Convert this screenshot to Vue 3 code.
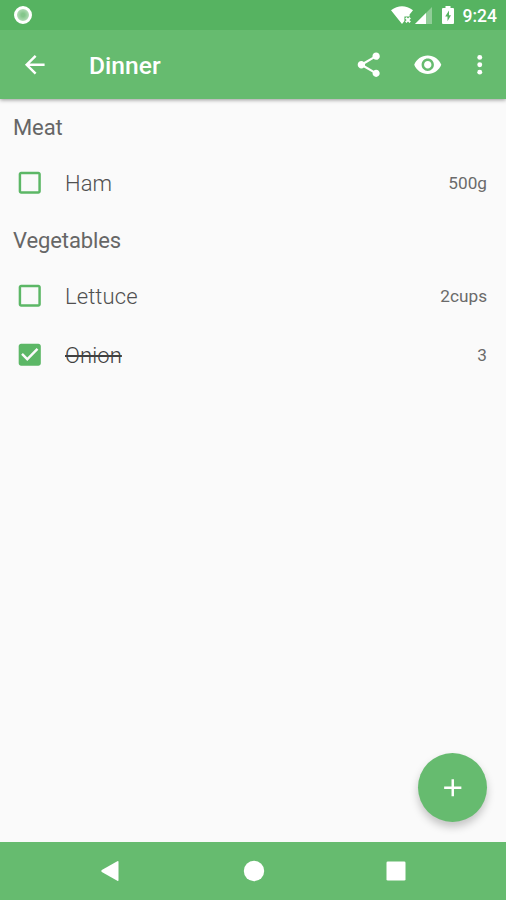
<script setup>
const sections = [
  { name: 'Meat', items: [{ name: 'Ham', amount: '500g', done: false }] },
  {
    name: 'Vegetables',
    items: [
      { name: 'Lettuce', amount: '2cups', done: false },
      { name: 'Onion', amount: '3', done: true },
    ],
  },
]
</script>

<template>
  <div class="screen">
    <div class="status">
      <span class="ring"></span>
      <svg class="wifi" viewBox="0 0 22 18">
        <path d="M0 4.2Q11-3.6 22 4.2L18.6 8.6V10.5H13.4V14.9L11 18Z" />
        <path d="M14.8 11.8l4.400 4.400m0-4.400l-4.400 4.400" stroke="#fff" stroke-width="2" />
      </svg>
      <svg class="signal" viewBox="0 0 17 17">
        <path d="M0 17L17 0V17Z" opacity=".35" />
        <path d="M0 17L11 6V17Z" />
      </svg>
      <svg class="battery" viewBox="0 0 12 18">
        <path fill-rule="evenodd" d="M3.5 0h5v2H11q1 0 1 1v14q0 1-1 1H1q-1 0-1-1V3q0-1 1-1h2.500ZM7 4.500L3.200 10.600H5.500V15.200L9 9.200H7Z" />
      </svg>
      <span class="time">9:24</span>
    </div>
    <header class="bar">
      <svg class="icon" viewBox="0 0 24 24"><path d="M20 11H7.830l5.590-5.590L12 4l-8 8 8 8 1.410-1.410L7.830 13H20v-2z" /></svg>
      <h1>Dinner</h1>
      <svg class="icon share" viewBox="0 0 24 24"><path d="M18 16.080c-.76 0-1.440.3-1.960.77L8.910 12.700c.05-.23.09-.46.09-.7s-.04-.47-.09-.7l7.050-4.110c.54.5 1.250.81 2.040.81 1.660 0 3-1.340 3-3s-1.340-3-3-3-3 1.340-3 3c0 .24.04.47.09.7L8.040 9.810C7.500 9.310 6.790 9 6 9c-1.660 0-3 1.340-3 3s1.340 3 3 3c.79 0 1.500-.31 2.040-.81l7.120 4.160c-.05.21-.08.43-.08.65 0 1.610 1.310 2.920 2.920 2.920s2.920-1.310 2.920-2.920-1.310-2.920-2.920-2.920z" /></svg>
      <svg class="icon eye" viewBox="0 0 24 24"><path d="M12 4.500C7 4.500 2.730 7.610 1 12c1.730 4.390 6 7.500 11 7.500s9.270-3.110 11-7.500c-1.730-4.390-6-7.500-11-7.500zM12 17c-2.760 0-5-2.240-5-5s2.240-5 5-5 5 2.240 5 5-2.240 5-5 5zm0-8c-1.660 0-3 1.340-3 3s1.340 3 3 3 3-1.340 3-3-1.340-3-3-3z" /></svg>
      <svg class="icon more" viewBox="0 0 24 24"><circle cx="12" cy="6" r="2" /><circle cx="12" cy="12" r="2" /><circle cx="12" cy="18" r="2" /></svg>
    </header>
    <main>
      <section v-for="s in sections" :key="s.name">
        <h2>{{ s.name }}</h2>
        <div v-for="i in s.items" :key="i.name" class="row">
          <svg class="check" viewBox="0 0 24 24">
            <path v-if="i.done" d="M19 3H5c-1.110 0-2 .9-2 2v14c0 1.100.89 2 2 2h14c1.110 0 2-.9 2-2V5c0-1.100-.89-2-2-2zm-9 14l-5-5 1.410-1.410L10 14.170l7.590-7.590L19 8l-9 9z" />
            <path v-else d="M19 5v14H5V5h14m0-2H5c-1.100 0-2 .9-2 2v14c0 1.100.9 2 2 2h14c1.100 0 2-.9 2-2V5c0-1.100-.9-2-2-2z" />
          </svg>
          <span class="name" :class="{ done: i.done }">{{ i.name }}</span>
          <span class="amount">{{ i.amount }}</span>
        </div>
      </section>
      <button class="fab" aria-label="Add">
        <svg viewBox="0 0 24 24"><path d="M19 13h-6v6h-2v-6H5v-2h6V5h2v6h6v2z" /></svg>
      </button>
    </main>
    <nav>
      <svg viewBox="0 0 22 22"><path d="M18.500 2V20Q18.500 21.300 17.300 20.700L1.800 12Q.6 11 1.800 10L17.300 1.300Q18.500.7 18.500 2Z" /></svg>
      <svg viewBox="0 0 22 22"><circle cx="11" cy="11" r="10.200" /></svg>
      <svg viewBox="0 0 22 22"><rect x="1.500" y="1.500" width="19" height="19" rx="1.300" /></svg>
    </nav>
  </div>
</template>

<style>
body { margin: 0; }
</style>

<style scoped>
.screen {
  display: flex;
  flex-direction: column;
  width: 506px;
  height: 900px;
  background: #fafafa;
  font-family: Roboto, sans-serif;
  overflow: hidden;
}
svg { display: block; flex: none; fill: #fff; }
.status {
  display: flex;
  align-items: center;
  position: relative;
  z-index: 2;
  height: 30px;
  padding: 0 9px 0 14px;
  box-sizing: border-box;
  background: #56b361;
  color: #fff;
}
.ring {
  width: 18px;
  height: 18px;
  margin-right: auto;
  box-sizing: border-box;
  border: 3.5px solid #fff;
  border-radius: 50%;
  background: radial-gradient(circle, #84c68b 20%, #b5deb9 75%);
}
.wifi { width: 22px; height: 18px; margin-right: 2px; }
.signal { width: 17px; height: 17px; margin-right: 10px; }
.battery { width: 12px; height: 18px; margin-right: 9px; }
.time { font-size: 17.5px; font-weight: 500; line-height: 30px; padding-top: 2px; }
.bar {
  display: flex;
  align-items: center;
  height: 69px;
  padding: 0 12px 0 20px;
  box-sizing: border-box;
  background: #66bb6f;
  box-shadow: 0 1px 4px rgba(0, 0, 0, 0.4);
  z-index: 1;
}
.icon { width: 29.5px; height: 29.5px; }
h1 {
  flex: 1;
  margin: 2px 0 0 39.5px;
  color: #fff;
  font-size: 24.6px;
  font-weight: 500;
}
.eye { margin-left: 29.5px; }
.more { margin-left: 22.5px; }
main { position: relative; flex: 1; }
h2 {
  margin: 0;
  padding: 2px 13px 0;
  height: 54px;
  box-sizing: border-box;
  line-height: 53px;
  color: #666;
  font-size: 22px;
  font-weight: 400;
  letter-spacing: -0.1px;
}
.row {
  display: flex;
  align-items: center;
  height: 59px;
  padding: 0 19px 0 15px;
}
.check { width: 29.5px; height: 29.5px; fill: #5cb766; }
.name {
  flex: 1;
  margin-left: 20.5px;
  padding-top: 2px;
  color: #505050;
  font-size: 22px;
  font-weight: 300;
  letter-spacing: 0.1px;
}
.name.done { flex: 0 0 auto; color: #404040; text-decoration: line-through; }
.amount { margin-left: auto; color: #6a6a6a; font-size: 17.2px; }
.fab {
  position: absolute;
  right: 19px;
  bottom: 19.5px;
  display: flex;
  align-items: center;
  justify-content: center;
  width: 69px;
  height: 69px;
  padding: 0;
  border: 0;
  border-radius: 50%;
  background: #66bb6f;
  box-shadow: 0 5px 9px rgba(0, 0, 0, 0.22);
}
.fab svg { width: 29.5px; height: 29.5px; }
nav {
  display: flex;
  align-items: center;
  justify-content: center;
  gap: 120.5px;
  height: 58.5px;
  padding-left: 1.5px;
  background: #66bb6f;
}
nav svg { width: 22px; height: 22px; }
</style>
